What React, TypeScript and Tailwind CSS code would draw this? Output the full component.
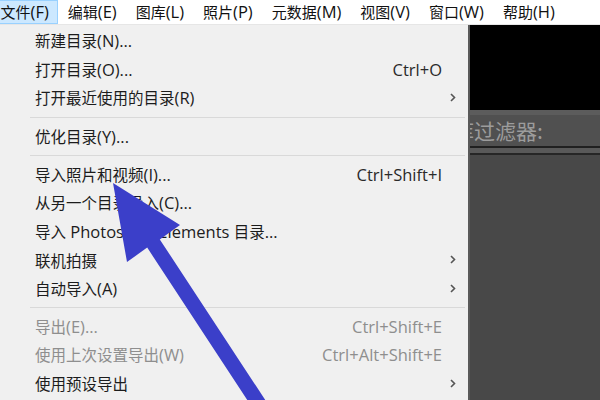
import React from "react";

type Row =
  | { type: "sep" }
  | { type: "item"; label: string; shortcut?: string; sub?: boolean; disabled?: boolean };

const rows: Row[] = [
  { type: "item", label: "新建目录(N)..." },
  { type: "item", label: "打开目录(O)...", shortcut: "Ctrl+O" },
  { type: "item", label: "打开最近使用的目录(R)", sub: true },
  { type: "sep" },
  { type: "item", label: "优化目录(Y)..." },
  { type: "sep" },
  { type: "item", label: "导入照片和视频(I)...", shortcut: "Ctrl+Shift+I" },
  { type: "item", label: "从另一个目录导入(C)..." },
  { type: "item", label: "导入 Photoshop Elements 目录..." },
  { type: "item", label: "联机拍摄", sub: true },
  { type: "item", label: "自动导入(A)", sub: true },
  { type: "sep" },
  { type: "item", label: "导出(E)...", shortcut: "Ctrl+Shift+E", disabled: true },
  { type: "item", label: "使用上次设置导出(W)", shortcut: "Ctrl+Alt+Shift+E", disabled: true },
  { type: "item", label: "使用预设导出", sub: true },
];

const menus = ["文件(F)", "编辑(E)", "图库(L)", "照片(P)", "元数据(M)", "视图(V)", "窗口(W)", "帮助(H)"];

function Mixed({ text, big }: { text: string; big?: boolean }) {
  const parts = text.split(/([\u4e00-\u9fff]+)/).filter((p) => p.length > 0);
  return (
    <>
      {parts.map((p, i) =>
        /[\u4e00-\u9fff]/.test(p) ? (
          <span
            key={i}
            className={
              big
                ? "font-['Noto_Sans_CJK_SC',sans-serif] text-[15.5px]"
                : "font-['Noto_Sans_CJK_SC',sans-serif] text-[15px]"
            }
          >
            {p}
          </span>
        ) : (
          <span key={i} className="font-['Open_Sans','Noto_Sans_CJK_SC',sans-serif] text-[16.5px]">
            {p}
          </span>
        )
      )}
    </>
  );
}

function Chevron() {
  return (
    <svg width="6" height="9" viewBox="0 0 6 9" className="block">
      <path d="M1 1 L4.5 4.5 L1 8" fill="none" stroke="#555" strokeWidth="1.6" />
    </svg>
  );
}

export default function App() {
  return (
    <div className="relative w-[600px] h-[400px] overflow-hidden bg-[#f0f0f0] font-['Noto_Sans_CJK_SC',sans-serif]">
      <div className="flex h-[25px] w-[620px] -ml-[9px] bg-white border-b border-[#e6e6e6]">
        {menus.map((m, i) => (
          <div
            key={m}
            className={
              i === 0
                ? "flex items-center px-[8.5px] text-[#111] bg-[#cce8ff] border border-[#99d1ff] leading-none whitespace-nowrap"
                : "flex items-center px-[8.5px] text-[#111] border border-transparent leading-none whitespace-nowrap"
            }
          >
            <span className="leading-none">
              <Mixed text={m} />
            </span>
          </div>
        ))}
      </div>
      <div className="flex h-[375px]">
        <div className="w-[470px] shrink-0 bg-[#f0f0f0] border-r-2 border-[#5a5a5a] pt-[2px]">
          {rows.map((r, i) =>
            r.type === "sep" ? (
              <div key={i} className="h-[10px] flex items-center pl-[30px] pr-[3px]">
                <div className="h-px w-full bg-[#d9d9d9]" />
              </div>
            ) : (
              <div key={i} className="h-[28.4px] flex items-center pl-[35px]">
                <div
                  className={
                    r.disabled
                      ? "flex-1 text-[#8e8e8e] leading-none whitespace-nowrap"
                      : "flex-1 text-[#1c1c1c] leading-none whitespace-nowrap"
                  }
                >
                  <Mixed text={r.label} big />
                </div>
                <div
                  className={
                    r.disabled
                      ? "text-[#8e8e8e] leading-none whitespace-nowrap"
                      : "text-[#2a2a2a] leading-none whitespace-nowrap"
                  }
                >
                  {r.shortcut ? <Mixed text={r.shortcut} big /> : null}
                </div>
                <div className="w-[26px] h-full flex items-center pl-[8px]">{r.sub ? <Chevron /> : null}</div>
              </div>
            )
          )}
        </div>
        <div className="flex-1 flex flex-col overflow-hidden">
          <div className="h-[85px] bg-black" />
          <div className="h-[5px] bg-[#5c5c5c]" />
          <div className="h-[31px] bg-[#505050] flex items-center">
            <span className="-ml-[17px] text-[21px] text-[#9c9c9c] leading-none whitespace-nowrap">库过滤器:</span>
          </div>
          <div className="h-[2px] bg-[#202020]" />
          <div className="h-[5px] bg-[#595959]" />
          <div className="h-[2px] bg-[#262626]" />
          <div className="flex-1 bg-[#484848]" />
        </div>
      </div>
      <svg className="absolute left-0 top-0 pointer-events-none" width="600" height="400" viewBox="0 0 600 400">
        <polygon
          points="113,183 127,262 147.2,247.6 263.1,424.1 275.7,415.9 159.8,239.4 180,225"
          fill="#3b3fc9"
        />
      </svg>
    </div>
  );
}
